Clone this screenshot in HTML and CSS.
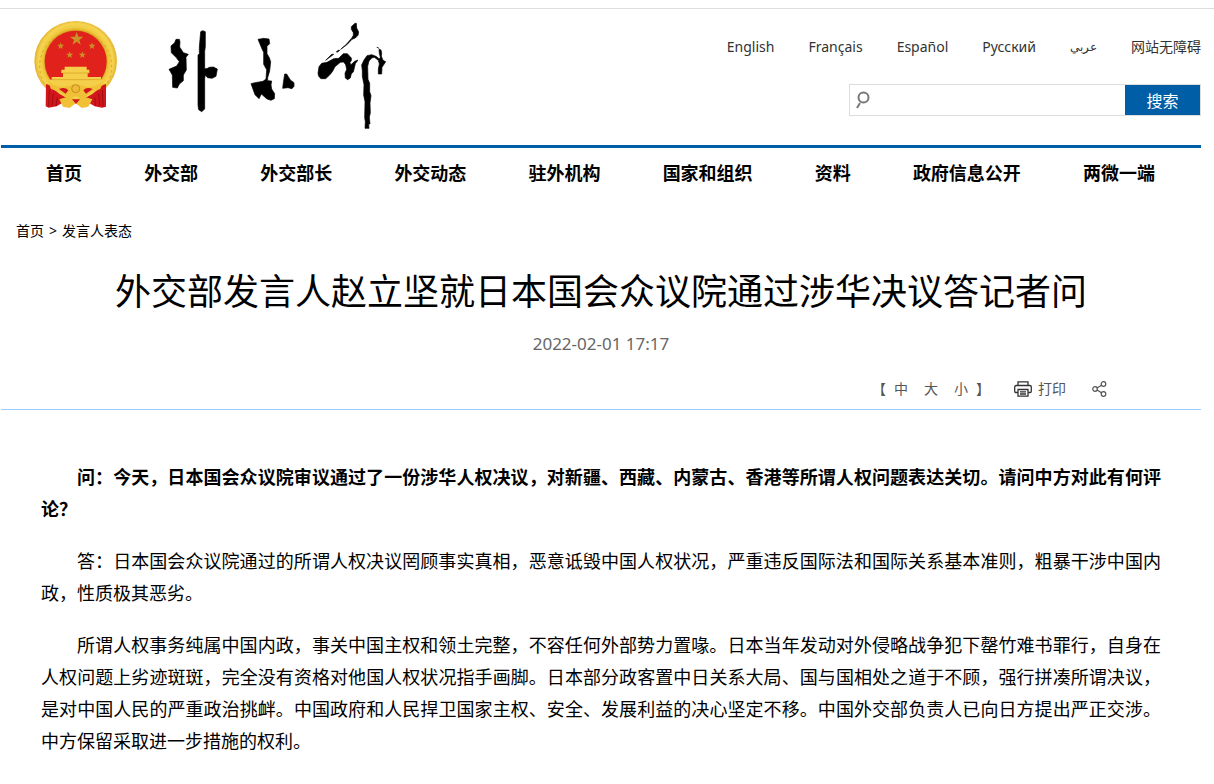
FILE: index.html
```html
<!DOCTYPE html>
<html lang="zh-CN">
<head>
<meta charset="utf-8">
<title>外交部发言人赵立坚就日本国会众议院通过涉华决议答记者问</title>
<meta name="viewport" content="width=device-width, initial-scale=1">
<link rel="stylesheet" href="styles.css">
</head>
<body>
<div class="page">
  <header class="header">
    <a class="brand" href="#" aria-label="外交部">
      <svg class="emblem" viewBox="0 0 330 330" aria-hidden="true">
        <defs>
          <radialGradient id="gold" gradientUnits="userSpaceOnUse" cx="167" cy="153" r="124">
            <stop offset=".74" stop-color="#d9a520"/>
            <stop offset=".8" stop-color="#efc83c"/>
            <stop offset=".9" stop-color="#f6d552"/>
            <stop offset="1" stop-color="#e2b02b"/>
          </radialGradient>
          <path id="star" d="M0-21 5-7 20-6.500 8 3 12.500 17 0 8.500-12.500 17-8 3-20-6.500-5-7Z"/>
        </defs>
        <ellipse cx="167" cy="153" rx="124" ry="120" fill="url(#gold)"/>
        <path fill="none" stroke="#d9a328" stroke-width="3" stroke-dasharray="7 9" d="M82 233a108 105 0 1 1 170 0"/>
        <circle cx="167" cy="155" r="93" fill="#e1211c"/>
        <g fill="#c99325">
          <use href="#star" transform="translate(170 87)"/>
          <use href="#star" transform="translate(122 108) scale(.52)"/>
          <use href="#star" transform="translate(216 108) scale(.52)"/>
          <use href="#star" transform="translate(149 135) scale(.52)"/>
          <use href="#star" transform="translate(187 135) scale(.52)"/>
        </g>
        <path fill="#f6cf4a" d="M134 170h66v9h8v10h-5v12h40v8h6l-6 14q-30 22-76 22t-76-22l-4-14h8v-8h34v-12h-5v-10h10z"/>
        <path stroke="#d39a26" stroke-width="2" fill="none" d="M128 189h80M94 209h148"/>
        <path fill="#d3161b" d="M78 222q16 4 26 18 30 28 64 28t64-28q10-14 26-18v68l-12 3-22-4-20-12h-74l-20 12-24 4-9-4z"/>
        <path stroke="#9c1013" stroke-width="3" fill="none" d="M88 240l-2 50M100 250l-4 38M247 240l2 50M236 250l3 38M112 262l-4 26M224 262l3 26"/>
        <path fill="#f0c136" d="M85 215q36 22 62 12 20-8 40 0 28 10 62-12l-8 22-32 12-20 18-22-8-22 8-20-18-32-12z"/>
        <path fill="#d3161b" d="M117 237q18-8 28 4l-8 10zM190 241q10-12 28-4l-20 14z"/>
        <circle cx="167" cy="236" r="12" fill="#edbb35" stroke="#c78b21" stroke-width="3"/>
        <path fill="#f0c136" d="M118 268l24-8 25 8 26-8 24 8-12 22-20 4-18-14-18 14-20-4z"/>
        <path fill="#d3161b" d="M156 268h24l-12 14z"/>
      </svg>
      <svg class="wordmark" viewBox="0 0 690 375" aria-hidden="true">
        <g stroke="#000" stroke-width="2" stroke-linejoin="round">
          <path d="M48 73l10 0 2 8-1 15 11 17 15 5-7 9 1 38-9 15v17l-12 10-6 12-14-2-1-37-10-17 23-10 8-13-10-13-14-14-1-20 11-10zM122 50l6-3 8 3v45l-2 14v52q8 1 14-4l12-1 12 6-4 22-12 6-13-2-7-8-2 10v92l-9 8-9-6-2-12V120l4-4V96z"/>
          <path d="M294 73l12-2 4-1 17 2 2 14-8 8v22l7 12 4 12-3 28-6 20v9l12 1-2 12 2 12 9 14-1 15-10 5-12-4-17-15-7 14-12-12-12-33 12-3 24-4 9-7 2-28-9-16v-36l-4-8zM374 177h6l11 18 11 8v11l-6 7-12-3-16 2 2-17z"/>
          <path d="M585 25h4l1 14 6 12-2 10-8 8-10 4-14 15-20 15 18-16 16-19 4-7v-8l-6-10v-8zM539 106l-6 5-4 0 5-5zM521 118l-12 9-12 9 9-9 9-9zM474 175l3-20 8-10 16-3 20-11 15-1 14-14 12 0 12 13v8l-4 5 2 8 12-11 10-4-8 11-6 25-6 5-3 13-8 5-7-5-1-14 5-12-3-14-6-8-10 1-16 13-8 15-8 10-12 11-14 0-7-7zM607 168l-2-18 7-15 9-13 14-3 13 5 10 8 3-5-3-12-1-12 6 2 2 9-1 9 5 13 8 4-5 8-6 9-1 20-10 0v-15l3-15-3-11-12-9-8 2-8 9-4 16 1 39 5 12 0 25 4 12-3 22 1 30-3 12 2 21-4 0 1 13-12 0 1-20-2-12 1-48-4-20 1-31-5-25z"/>
          <path d="M650 97l5 1 2 3"/>
        </g>
      </svg>
    </a>
    <div class="tools">
      <nav class="langs" aria-label="语言">
        <a href="#">English</a><a href="#">Français</a><a href="#">Español</a><a href="#">Русский</a><a class="arabic" href="#" lang="ar">عربي</a><a href="#">网站无障碍</a>
      </nav>
      <form class="search" role="search">
        <svg class="lens" viewBox="0 0 16 18" aria-hidden="true"><circle cx="8.500" cy="6.500" r="5"/><path d="M5 12l-3 5"/></svg>
        <input type="text" aria-label="搜索内容">
        <button type="button">搜索</button>
      </form>
    </div>
  </header>
  <nav class="nav" aria-label="主导航">
    <a href="#">首页</a><a href="#">外交部</a><a href="#">外交部长</a><a href="#">外交动态</a><a href="#">驻外机构</a><a href="#">国家和组织</a><a href="#">资料</a><a href="#">政府信息公开</a><a href="#">两微一端</a>
  </nav>
  <nav class="crumbs" aria-label="当前位置"><a href="#">首页</a><span>&gt;</span><a href="#">发言人表态</a></nav>
  <main>
    <h1>外交部发言人赵立坚就日本国会众议院通过涉华决议答记者问</h1>
    <time class="date" datetime="2022-02-01T17:17">2022-02-01 17:17</time>
    <div class="actions">
      <div class="sizes"><span>【</span><button type="button">中</button><button type="button">大</button><button type="button">小</button><span>】</span></div>
      <button class="print" type="button">
        <svg viewBox="0 0 18 16" aria-hidden="true"><path d="M4 4.500V.8h10v3.700M4 11.500H2q-1.300 0-1.300-1.300V6q0-1.500 1.500-1.500h13.600q1.500 0 1.500 1.500v4.200q0 1.300-1.300 1.300h-2M4 8.500h10v6.700H4zM6 10.800h6M6 13h6"/></svg>
        打印
      </button>
      <button class="share" type="button" aria-label="分享">
        <svg viewBox="0 0 15 16" aria-hidden="true"><circle cx="3" cy="8" r="2.300"/><circle cx="11.500" cy="3" r="2.300"/><circle cx="11.500" cy="13" r="2.300"/><path d="M5 7l4.500-2.800M5 9l4.500 2.800"/></svg>
      </button>
    </div>
    <article class="article">
      <p><strong>问：今天，日本国会众议院审议通过了一份涉华人权决议，对新疆、西藏、内蒙古、香港等所谓人权问题表达关切。请问中方对此有何评论？</strong></p>
      <p>答：日本国会众议院通过的所谓人权决议罔顾事实真相，恶意诋毁中国人权状况，严重违反国际法和国际关系基本准则，粗暴干涉中国内政，性质极其恶劣。</p>
      <p>所谓人权事务纯属中国内政，事关中国主权和领土完整，不容任何外部势力置喙。日本当年发动对外侵略战争犯下罄竹难书罪行，自身在人权问题上劣迹斑斑，完全没有资格对他国人权状况指手画脚。日本部分政客置中日关系大局、国与国相处之道于不顾，强行拼凑所谓决议，是对中国人民的严重政治挑衅。中国政府和人民捍卫国家主权、安全、发展利益的决心坚定不移。中国外交部负责人已向日方提出严正交涉。中方保留采取进一步措施的权利。</p>
    </article>
  </main>
</div>
</body>
</html>
```
FILE: styles.css
```css
* { box-sizing: border-box; }
body {
  margin: 8px 0 0;
  border-top: 1px solid #ddd;
  background: #fff;
  color: #000;
  font-family: "Noto Sans", "Noto Sans CJK SC", sans-serif;
}
a { color: inherit; text-decoration: none; }
button { border: 0; padding: 0; background: none; color: inherit; font: inherit; cursor: pointer; }
svg { display: block; }
.page { max-width: 1200px; margin: 0 13px 0 1px; }
.header { display: flex; justify-content: space-between; height: 136px; }
.brand { display: flex; align-items: flex-start; padding: 1px 0 0 19px; }
.emblem { width: 110px; height: 110px; }
.wordmark { width: 230px; height: 125px; margin: 5px 0 0 30px; }
.tools { display: flex; flex-direction: column; align-items: flex-end; gap: 27px; padding-top: 28px; }
.langs { display: flex; gap: 34px; font-size: 14px; line-height: 20px; color: #333; }
.langs .arabic { font-size: 12px; }
.search { display: flex; align-items: center; width: 352px; height: 32px; border: 1px solid #ddd; }
.lens { flex: none; width: 16px; height: 18px; margin: 0 6px 0 5px; fill: none; stroke: #777; stroke-width: 2; }
.search input { flex: 1; min-width: 0; height: 30px; border: 0; outline: 0; background: none; font-size: 14px; }
.search button { width: 75px; height: 30px; background: #005ea7; color: #fff; font-size: 16px; }
.nav { display: flex; justify-content: space-between; padding: 10px 46px 0 45px; border-top: 3px solid #005ea7; font-size: 18px; font-weight: 700; line-height: 30px; }
.crumbs { display: flex; gap: 5px; padding: 33px 0 0 15px; font-size: 14px; line-height: 20px; }
h1 { margin: 24px 0 0; font-size: 36px; font-weight: 400; line-height: 54px; text-align: center; }
.date { display: block; margin-top: 13px; color: #666; font-size: 17px; line-height: 24px; text-align: center; }
.actions { display: flex; align-items: center; height: 54px; padding: 13px 94px 0 0; justify-content: flex-end; border-bottom: 1px solid #9cf; color: #555; font-size: 14px; line-height: 20px; }
.sizes { display: flex; }
.sizes button { width: 30px; }
.print { display: flex; align-items: center; gap: 6px; margin-left: 24px; }
.print svg { width: 18px; height: 16px; fill: none; stroke: #333; stroke-width: 1.3; }
.share { margin-left: 26px; }
.share svg { width: 15px; height: 16px; fill: none; stroke: #555; stroke-width: 1.2; }
.article { padding: 51px 40px 28px; font-size: 18px; line-height: 32px; text-align: justify; }
.article p { margin: 0 0 20px; text-indent: 2em; }
```
